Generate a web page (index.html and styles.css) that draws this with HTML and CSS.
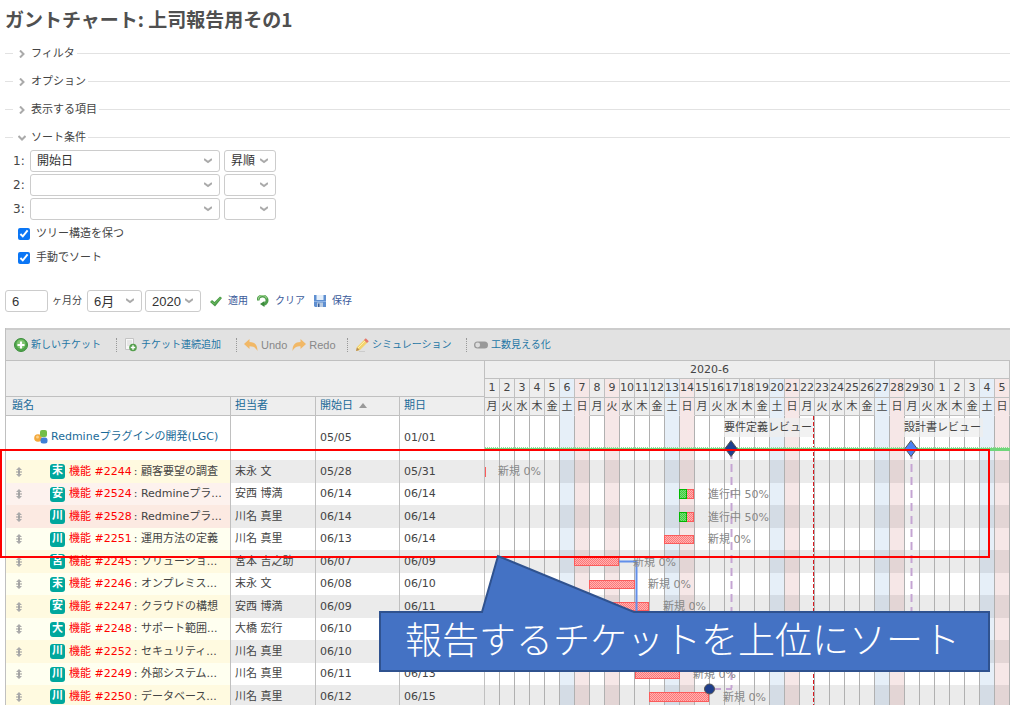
FILE: index.html
```html
<!DOCTYPE html>
<html lang="ja">
<head>
<meta charset="utf-8">
<title>ガントチャート: 上司報告用その1</title>
<link rel="stylesheet" href="styles.css">
</head>
<body>
<svg class="defs" aria-hidden="true">
  <symbol id="chev-right" viewBox="0 0 8 8"><path d="M2 0.500l3.500 3.500-3.500 3.500" fill="none" stroke="#aaa" stroke-width="2"/></symbol>
  <symbol id="chev-down" viewBox="0 0 8 8"><path d="M.5 2l3.500 3.500 3.500-3.500" fill="none" stroke="#aaa" stroke-width="2"/></symbol>
  <symbol id="move" viewBox="0 0 8 12"><path d="M4 1l3 3H5v4h2l-3 3-3-3h2V4H1z" fill="#aaa"/><path d="M1 5.500h6v1H1z" fill="#999"/></symbol>
</svg>
<main>
  <h1>ガントチャート: 上司報告用その1</h1>
  <form>
    <fieldset><legend><button type="button" class="toggle"><svg><use href="#chev-right"/></svg>フィルタ</button></legend></fieldset>
    <fieldset><legend><button type="button" class="toggle"><svg><use href="#chev-right"/></svg>オプション</button></legend></fieldset>
    <fieldset><legend><button type="button" class="toggle"><svg><use href="#chev-right"/></svg>表示する項目</button></legend></fieldset>
    <fieldset class="open"><legend><button type="button" class="toggle"><svg><use href="#chev-down"/></svg>ソート条件</button></legend>
      <div class="sort-row"><label for="s1">1:</label><select id="s1" class="wide"><option>開始日</option></select><select class="order" aria-label="順序 1"><option>昇順</option></select></div>
      <div class="sort-row"><label for="s2">2:</label><select id="s2" class="wide"><option></option></select><select class="order" aria-label="順序 2"><option></option></select></div>
      <div class="sort-row"><label for="s3">3:</label><select id="s3" class="wide"><option></option></select><select class="order" aria-label="順序 3"><option></option></select></div>
      <label class="check"><input type="checkbox" checked>ツリー構造を保つ</label>
      <label class="check"><input type="checkbox" checked>手動でソート</label>
    </fieldset>
    <div class="period">
      <input id="months" class="months" type="text" value="6"><label for="months">ヶ月分</label>
      <select class="month" aria-label="月"><option>6月</option></select>
      <select class="year" aria-label="年"><option>2020</option></select>
      <a href="#" class="apply"><svg viewBox="0 0 12 12"><path d="M0 7l2-2 2.500 2L10 1.500 12 3 5 11.500z" fill="#4a9a48"/><path d="M1.500 6.600l3 2.400L10.500 2.800" fill="none" stroke="#6fbf5f"/></svg>適用</a>
      <a href="#" class="clear"><svg viewBox="0 0 12 12"><path d="M1 5.500A4.500 4.300 0 1 1 7 9.300" fill="none" stroke="#4f9f4c" stroke-width="3"/><path d="M7.500 6v6L3 9z" fill="#3c8c3c"/><path d="M1.500 4.500a4 3.500 0 0 1 8-1" fill="none" stroke="#9bd08e" stroke-width="1.200"/></svg>クリア</a>
      <a href="#" class="save"><svg viewBox="0 0 12 12"><path d="M0 0h12v12H1L0 11z" fill="#5f8fd0"/><path d="M2.500 0h7v5h-7z" fill="#e4effb"/><path d="M3 7.500h6V12H3z" fill="#b9cbe2"/><path d="M4 8.500h1.500V12H4z" fill="#3b5f98"/><path d="M0 6h12v1H0z" fill="#8fb4e6"/></svg>保存</a>
    </div>
  </form>

  <section class="gantt">
    <nav class="toolbar">
      <div><button type="button"><svg viewBox="0 0 14 14"><circle cx="7" cy="7" r="6.500" fill="#4fa34a" stroke="#3d8f3d"/><circle cx="7" cy="6" r="4.500" fill="#7cc36e"/><path d="M7 3.500v7M3.500 7h7" stroke="#fff" stroke-width="2.200"/></svg>新しいチケット</button></div>
      <div><button type="button"><svg viewBox="0 0 14 14"><path d="M1.500.5h8v11h-8z" fill="#f7f7f7" stroke="#c4c4c4"/><path d="M3 3h5M3 5h5M3 7h3" stroke="#d6d6d6"/><circle cx="9" cy="9.500" r="3.800" fill="#559f4d"/><path d="M9 7.300v4.400M6.800 9.500h4.400" stroke="#fff" stroke-width="1.400"/></svg>チケット連続追加</button></div>
      <div class="history"><button type="button" class="off"><svg viewBox="0 0 14 14"><path d="M0 6l5.500-5v3C11 4 13.500 7 13.500 13 11.500 9.500 9.500 8.300 5.500 8.300V11z" fill="#f1b867"/></svg>Undo</button><button type="button" class="off"><svg viewBox="0 0 14 14"><path d="M14 6L8.500 1v3C3 4 .5 7 .5 13 2.500 9.500 4.500 8.300 8.500 8.300V11z" fill="#f1b867"/></svg>Redo</button></div>
      <div><button type="button"><svg viewBox="0 0 14 14"><path d="M1 13l1-4 7.500-7.500 3 3L5 12z" fill="#f3d36d"/><path d="M9 2l1.800-1.700 3 3L12 5z" fill="#e5776d"/><path d="M1 13l.9-3.500L4.500 12z" fill="#b88d55"/><path d="M3 10l7-7" stroke="#fff0a8"/><path d="M4 13.500h6" stroke="#ccc"/></svg>シミュレーション</button></div>
      <div><button type="button"><svg viewBox="0 0 14 14"><rect y="3.500" width="14" height="7" rx="3.500" fill="#999"/><circle cx="3.700" cy="7" r="2.400" fill="#ddd"/></svg>工数見える化</button></div>
    </nav>
    <div class="panes">
      <table class="issues">
        <colgroup><col class="c-subject"><col class="c-user"><col class="c-start"><col class="c-due"></colgroup>
        <thead>
          <tr class="blank"><td colspan="4"></td></tr>
          <tr><th>題名</th><th>担当者</th><th>開始日<svg class="asc" viewBox="0 0 8 5"><path d="M0 5l4-5 4 5z" fill="#999"/></svg></th><th>期日</th></tr>
        </thead>
        <tbody>
          <tr class="project"><td><a href="#"><svg viewBox="0 0 14 14"><circle cx="4" cy="8" r="3.800" fill="#f3a83b"/><rect x="6" y="0" width="7" height="7" rx="2" fill="#72bd48"/><rect x="6.500" y="7.500" width="7" height="6" rx="2.500" fill="#3f7fd6"/><circle cx="3.500" cy="7" r="1.500" fill="#fbd08c"/></svg>Redmineプラグインの開発(LGC)</a></td><td></td><td>05/05</td><td>01/01</td></tr>
          <tr><td><div><svg><use href="#move"/></svg><b>末</b><a href="#">機能 #2244</a><span>: 顧客要望の調査</span></div></td><td>末永 文</td><td>05/28</td><td>05/31</td></tr>
          <tr class="late"><td><div><svg><use href="#move"/></svg><b>安</b><a href="#">機能 #2524</a><span>: Redmineプラ...</span></div></td><td>安西 博満</td><td>06/14</td><td>06/14</td></tr>
          <tr class="late"><td><div><svg><use href="#move"/></svg><b>川</b><a href="#">機能 #2528</a><span>: Redmineプラ...</span></div></td><td>川名 真里</td><td>06/14</td><td>06/14</td></tr>
          <tr><td><div><svg><use href="#move"/></svg><b>川</b><a href="#">機能 #2251</a><span>: 運用方法の定義</span></div></td><td>川名 真里</td><td>06/13</td><td>06/14</td></tr>
          <tr><td><div><svg><use href="#move"/></svg><b>宮</b><a href="#">機能 #2245</a><span>: ソリューショ...</span></div></td><td>宮本 吉之助</td><td>06/07</td><td>06/09</td></tr>
          <tr><td><div><svg><use href="#move"/></svg><b>末</b><a href="#">機能 #2246</a><span>: オンプレミス...</span></div></td><td>末永 文</td><td>06/08</td><td>06/10</td></tr>
          <tr><td><div><svg><use href="#move"/></svg><b>安</b><a href="#">機能 #2247</a><span>: クラウドの構想</span></div></td><td>安西 博満</td><td>06/09</td><td>06/11</td></tr>
          <tr><td><div><svg><use href="#move"/></svg><b>大</b><a href="#">機能 #2248</a><span>: サポート範囲...</span></div></td><td>大橋 宏行</td><td>06/10</td><td></td></tr>
          <tr><td><div><svg><use href="#move"/></svg><b>川</b><a href="#">機能 #2252</a><span>: セキュリティ...</span></div></td><td>川名 真里</td><td>06/10</td><td></td></tr>
          <tr><td><div><svg><use href="#move"/></svg><b>川</b><a href="#">機能 #2249</a><span>: 外部システム...</span></div></td><td>川名 真里</td><td>06/11</td><td>06/13</td></tr>
          <tr><td><div><svg><use href="#move"/></svg><b>川</b><a href="#">機能 #2250</a><span>: データベース...</span></div></td><td>川名 真里</td><td>06/12</td><td>06/15</td></tr>
        </tbody>
      </table>
      <div class="chart">
        <table class="days">
          <tr><th colspan="30">2020-6</th><th colspan="5"></th></tr>
          <tr><td>1</td><td>2</td><td>3</td><td>4</td><td>5</td><td class="sat">6</td><td class="hol">7</td><td>8</td><td class="hol">9</td><td>10</td><td>11</td><td>12</td><td class="sat">13</td><td class="hol">14</td><td>15</td><td>16</td><td>17</td><td>18</td><td>19</td><td class="sat">20</td><td class="hol">21</td><td>22</td><td>23</td><td>24</td><td>25</td><td>26</td><td class="sat">27</td><td class="hol">28</td><td>29</td><td>30</td><td>1</td><td>2</td><td>3</td><td class="sat">4</td><td class="hol">5</td></tr>
          <tr><td>月</td><td>火</td><td>水</td><td>木</td><td>金</td><td class="sat">土</td><td class="hol">日</td><td>月</td><td class="hol">火</td><td>水</td><td>木</td><td>金</td><td class="sat">土</td><td class="hol">日</td><td>月</td><td>火</td><td>水</td><td>木</td><td>金</td><td class="sat">土</td><td class="hol">日</td><td>月</td><td>火</td><td>水</td><td>木</td><td>金</td><td class="sat">土</td><td class="hol">日</td><td>月</td><td>火</td><td>水</td><td>木</td><td>金</td><td class="sat">土</td><td class="hol">日</td></tr>
        </table>
        <svg class="bars" viewBox="485 416 525 292" width="525" height="292">
          <defs>
            <pattern id="grid" x="485" y="416" width="15" height="10" patternUnits="userSpaceOnUse"><rect x="14" width="1" height="10" fill="#b0b0b0"/></pattern>
            <pattern id="stripe" x="485" y="460" width="525" height="45" patternUnits="userSpaceOnUse"><rect width="525" height="23" fill="#000" fill-opacity=".08"/></pattern>
            <pattern id="todo" width="2" height="2" patternUnits="userSpaceOnUse"><rect width="2" height="2" fill="#ffb3b3"/><path d="M0 0h1v1H0zM1 1h1v1H1z" fill="#fd7777"/></pattern>
            <pattern id="done" width="2" height="2" patternUnits="userSpaceOnUse"><rect width="2" height="2" fill="#7ae07a"/><path d="M0 0h1v1H0zM1 1h1v1H1z" fill="#3fcc3f"/></pattern>
          </defs>
          <g fill="#e6eff8"><rect x="560" y="416" width="15" height="292"/><rect x="665" y="416" width="15" height="292"/><rect x="770" y="416" width="15" height="292"/><rect x="875" y="416" width="15" height="292"/><rect x="980" y="416" width="15" height="292"/></g>
          <g fill="#f6e7e7"><rect x="575" y="416" width="15" height="292"/><rect x="605" y="416" width="15" height="292"/><rect x="680" y="416" width="15" height="292"/><rect x="785" y="416" width="15" height="292"/><rect x="890" y="416" width="15" height="292"/><rect x="995" y="416" width="15" height="292"/></g>
          <rect x="485" y="460" width="525" height="248" fill="url(#stripe)"/>
          <rect x="485" y="416" width="525" height="292" fill="url(#grid)"/>
          <g fill="#eee" fill-opacity=".75"><rect x="724" y="418" width="90" height="19"/><rect x="904" y="418" width="79" height="19"/></g>
          <path d="M813.500 416v292" stroke="#d8191f" stroke-dasharray="4 2"/>
          <path d="M485 449.500h525" stroke="#70d67a" stroke-width="3"/><path d="M485 447.500h525" stroke="#8fdc92" stroke-dasharray="1 1"/>
          <g fill="none" stroke="#c5a5d3" stroke-width="2"><path d="M731.500 451V688" stroke-dasharray="8 5"/><path d="M911.500 451V612" stroke-dasharray="8 5"/><path d="M715 689h17" stroke-dasharray="6 5"/></g>
          <g stroke="#555"><path d="M731 440.500l6 8-6 8-6-8z" fill="#1f3f8c"/><path d="M911 440.500l6 8-6 8-6-8z" fill="#4f81f0"/></g>
          <rect x="485" y="467" width="1" height="10" fill="#fb5c5c"/>
          <g fill="url(#todo)" stroke="#fb5c5c">
            <rect x="679.500" y="489.500" width="14" height="9"/><rect x="679.500" y="512.500" width="14" height="9"/>
            <rect x="664.500" y="535.500" width="29" height="8"/><rect x="574.500" y="557.500" width="44" height="8"/>
            <rect x="589.500" y="580.500" width="45" height="8"/><rect x="604.500" y="602.500" width="44" height="8"/>
            <rect x="635.500" y="670.500" width="44" height="8"/><rect x="649.500" y="692.500" width="59" height="9"/>
          </g>
          <g fill="url(#done)" stroke="#00b800"><rect x="679.500" y="489.500" width="7" height="9"/><rect x="679.500" y="512.500" width="7" height="9"/></g>
          <path d="M619 561.500h17.500V612" fill="none" stroke="#628fea" stroke-width="2"/>
          <circle cx="709.500" cy="689" r="5" fill="#1f3f8c" stroke="#555"/>
          <g class="status"><text x="498" y="475">新規 0%</text><text x="708" y="498">進行中 50%</text><text x="708" y="521">進行中 50%</text><text x="708" y="543">新規 0%</text><text x="633" y="566">新規 0%</text><text x="648" y="588">新規 0%</text><text x="663" y="610">新規 0%</text><text x="693" y="678">新規 0%</text><text x="723" y="701">新規 0%</text></g>
          <g class="milestone"><text x="724" y="431">要件定義レビュー</text><text x="904" y="431">設計書レビュー</text></g>
        </svg>
      </div>
    </div>
  </section>
</main>
<svg class="callout" viewBox="0 0 1010 705" width="1010" height="705">
  <rect x="1" y="450" width="988" height="107" fill="none" stroke="#f00" stroke-width="2"/>
  <path d="M380 612h102l16-56 136 56h355v59H380z" fill="#4472c4" stroke="#2f528f" stroke-width="2"/>
  <text x="405" y="654">報告するチケットを上位にソート</text>
</svg>
</body>
</html>
```
FILE: styles.css
```css
* { box-sizing: border-box; }
html { overflow: hidden; }
body {
  margin: 0;
  position: relative;
  background: #fff;
  color: #444;
  font: 11px/16px "DejaVu Sans", "Noto Sans CJK JP", sans-serif;
}
a { color: #1a6a98; text-decoration: none; }
button { border: 0; padding: 0; background: none; font: inherit; color: inherit; }
.defs { position: absolute; width: 0; height: 0; }
main { padding-left: 5px; }
h1 {
  margin: 0;
  padding: 7px 0 14px;
  font: bold 19px/24px "Noto Sans CJK JP", sans-serif;
  color: #505050;
}

fieldset {
  margin: 0 0 12px;
  padding: 0;
  border: 0;
  border-top: 1px solid #e2e2e2;
  min-width: 0;
}
legend { margin-left: 8px; padding: 1px 2px 0 5px; height: 16px; }
.toggle { display: flex; align-items: center; gap: 5px; height: 16px; }
.toggle svg { width: 8px; height: 8px; }
.open { padding-top: 5px; margin-bottom: 20px; }

.sort-row { display: flex; align-items: center; gap: 4px; margin-bottom: 2px; }
.sort-row label { width: 21px; padding-left: 8px; font-size: 12px; }
select, .months {
  height: 22px;
  margin: 0;
  padding: 0 6px;
  border: 1px solid #ccc;
  border-radius: 3px;
  background-color: #fff;
  color: #333;
  font: 12px "Liberation Sans", "Noto Sans CJK JP", sans-serif;
}
select {
  appearance: none;
  background-image: url("data:image/svg+xml,%3Csvg xmlns='http://www.w3.org/2000/svg' viewBox='0 0 8 8'%3E%3Cpath d='M0 2l4 3 4-3' fill='none' stroke='%23aaa' stroke-width='2'/%3E%3C/svg%3E");
  background-repeat: no-repeat;
  background-position: right 7px center;
  background-size: 8px 8px;
}
.wide { width: 190px; }
.order { width: 52px; }
.check { display: flex; align-items: center; gap: 6px; height: 24px; padding-left: 13px; }
.check input { width: 12px; height: 12px; margin: 0; accent-color: #0b76f5; }

.period { display: flex; align-items: center; font-size: 10px; }
.period select, .months { font-size: 13px; }
.months { width: 43px; margin-right: 4px; }
.month { width: 55px; margin: 0 3px 0 5px; }
.year { width: 56px; }
.period a { display: flex; align-items: center; gap: 6px; margin-left: 9px; color: #3a5a9a; }
.period a svg { width: 12px; height: 12px; }

.gantt { margin-top: 16px; border-left: 1px solid #c0c0c0; }
.toolbar {
  display: grid;
  grid-template-columns: 110px 120px 111px 119px 1fr;
  height: 33px;
  border-top: 2px solid #ccc;
  border-bottom: 1px solid #c0c0c0;
  background: #e2e2e2;
  font-size: 10px;
  color: #1f76a5;
}
.toolbar div { display: flex; align-items: center; padding-left: 8px; }
.toolbar div + div { padding-left: 0; }
.toolbar div + div::before { content: ""; height: 14px; margin-right: 7px; border-left: 1px dotted #999; }
.toolbar button { display: flex; align-items: center; gap: 3px; }
.toolbar svg { width: 14px; height: 14px; }
.toolbar .history button { margin-right: 5px; }
.toolbar .off { color: #888; font-family: "Liberation Sans", sans-serif; font-size: 11px; }

.panes { display: flex; }
table { border-collapse: separate; border-spacing: 0; table-layout: fixed; }
td, th { padding: 0; font-weight: normal; }
.issues { flex: none; width: 479px; align-self: flex-start; }
.c-subject { width: 225px; }
.c-user, .c-due { width: 85px; }
.c-start { width: 84px; }
.issues td, .issues th { padding-left: 4px; border-right: 1px solid #c0c0c0; text-align: left; white-space: nowrap; }
.issues thead { background: #eee; color: #1a6a98; }
.issues thead td, .issues thead th { border-bottom: 1px solid #c0c0c0; }
.issues .blank td { height: 36px; }
.issues th { height: 19px; line-height: 18px; }
.issues th:first-child { padding-left: 6px; }
.asc { width: 8px; height: 5px; margin-left: 6px; vertical-align: 1px; }
.issues .project td { height: 44px; }
.project a { display: flex; align-items: center; gap: 3px; padding: 0 0 3px 24px; }
.project svg { width: 14px; height: 14px; }
.issues tbody tr:nth-child(even) td { height: 23px; background: #ebebeb; }
.issues tbody tr:nth-child(odd):not(.project) td { height: 22px; }
.issues tbody tr:nth-child(even) td:first-child { background: #fffae0; }
.issues tbody tr:nth-child(odd):not(.project) td:first-child { background: #fffff0; }
.issues tbody tr.late:nth-child(odd) td:first-child { background: #fdf2ee; }
.issues tbody tr.late:nth-child(even) td:first-child { background: #fceae2; }
.issues td div { display: flex; align-items: center; padding-left: 5px; }
.issues td div svg { width: 8px; height: 12px; margin-right: 27px; }
.issues b {
  width: 15px;
  height: 15px;
  margin-right: 4px;
  border-radius: 3px;
  background: #00a79d;
  color: #fff;
  font-size: 11px;
  line-height: 14px;
  text-align: center;
}
.issues td div a { color: #f00; }
.issues td span { padding-left: 2px; }

.chart { flex: 1; min-width: 0; overflow: hidden; background: linear-gradient(#eee 55px, #fff 55px); }
.days { width: 525px; text-align: center; background: #eee; }
.days th, .days td { border-right: 1px solid #c0c0c0; border-bottom: 1px solid #c0c0c0; white-space: nowrap; line-height: 17px; height: 18px; }
.days tr:nth-child(2) td { height: 19px; line-height: 18px; }
.days .sat { background: #e6eff8; }
.days .hol { background: #f6e7e7; }
.days tr:last-child .sat, .days tr:last-child .hol { border-bottom-color: transparent; }
.bars { display: block; }
.status { fill: #888; }
.milestone { fill: #444; }

.callout { position: absolute; left: 0; top: 0; pointer-events: none; }
.callout text { fill: #fff; font: 300 37px "Noto Sans CJK JP", sans-serif; }
```
